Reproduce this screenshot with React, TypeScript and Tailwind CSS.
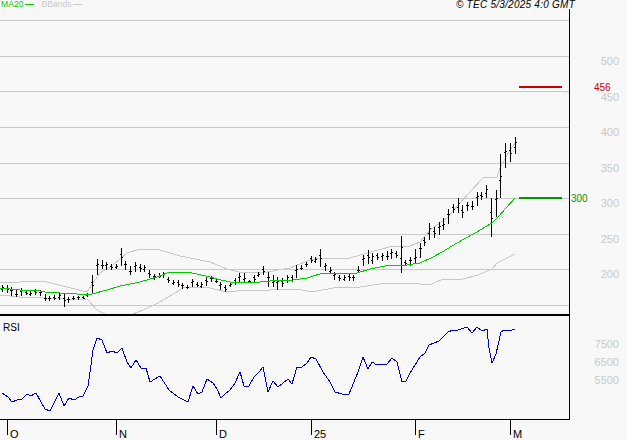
type Pt = [number, number];

// [high, low] per session, oldest first
const bars: Pt[] = [
  [285, 292], [285, 293], [287, 296], [290, 297], [288, 296], [290, 295], [291, 296], [289, 295], [290, 296], [294, 301], [296, 301],
  [295, 300], [293, 300], [293, 307], [297, 303], [296, 300], [296, 300], [296, 299], [293, 297], [275, 294], [259, 275], [260, 269],
  [262, 270], [264, 270], [264, 269], [248, 266], [261, 270], [266, 275], [262, 272], [264, 272], [265, 272], [270, 278], [274, 280],
  [273, 278], [272, 278], [277, 283], [280, 285], [280, 287], [283, 289], [285, 289], [279, 287], [282, 287], [282, 288], [276, 286],
  [276, 282], [278, 283], [282, 290], [285, 292], [282, 287], [278, 285], [273, 283], [273, 283], [280, 283], [275, 282], [272, 277],
  [266, 275], [272, 287], [275, 287], [277, 290], [278, 287], [275, 283], [275, 282], [265, 278], [265, 270], [262, 267], [256, 263],
  [257, 263], [249, 267], [263, 271], [267, 273], [272, 280], [275, 281], [275, 281], [273, 281], [275, 281], [266, 273], [255, 266],
  [250, 264], [253, 264], [253, 260], [253, 261], [251, 260], [249, 259], [251, 258], [236, 273], [260, 266], [257, 266], [249, 264],
  [243, 258], [237, 246], [223, 240], [227, 238], [222, 235], [218, 230], [209, 224], [204, 213], [198, 213], [205, 218], [202, 211],
  [201, 210], [192, 206], [192, 200], [185, 198], [198, 237], [190, 217], [154, 198], [143, 168], [143, 162], [137, 154],
];

const ma20: Pt[] = [
  [0, 288], [10, 289], [20, 290], [40, 291], [45, 292], [60, 293], [77, 294], [92, 294], [107, 290], [120, 286], [140, 282], [157, 277],
  [167, 273], [187, 272], [197, 274], [210, 277], [217, 279], [230, 282], [260, 282], [270, 281], [293, 280], [307, 278], [323, 273],
  [357, 273], [370, 269], [390, 265], [407, 265], [420, 263], [433, 257], [442, 252], [457, 243], [475, 233], [492, 223], [498, 217], [515, 198],
];

const bbUpper: Pt[] = [
  [0, 283], [20, 282], [43, 281], [67, 287], [87, 292], [93, 283], [100, 273], [113, 265], [127, 253], [140, 249], [160, 250], [180, 256],
  [210, 262], [227, 269], [243, 273], [267, 272], [290, 268], [310, 260], [323, 258], [350, 258], [367, 253], [393, 246], [410, 246],
  [420, 242], [430, 230], [447, 218], [458, 205], [483, 178], [497, 177], [500, 168], [510, 150], [515, 143],
];

const bbLower: Pt[] = [
  [0, 295], [20, 297], [43, 298], [88, 300], [97, 310], [105, 314], [133, 314], [143, 310], [160, 302], [183, 288], [197, 287], [210, 288],
  [227, 292], [247, 290], [270, 290], [297, 289], [312, 292], [333, 288], [360, 287], [387, 283], [420, 284], [432, 284], [443, 279],
  [463, 279], [478, 275], [492, 269], [497, 263], [515, 254],
];

const rsi: Pt[] = [
  [2, 393], [8, 397], [12, 402], [17, 400], [22, 399], [27, 394], [31, 396], [36, 393], [41, 402], [45, 409], [50, 411], [59, 393], [64, 406],
  [69, 398], [74, 400], [79, 397], [83, 396], [88, 386], [91, 365], [93, 350], [97, 338], [102, 340], [107, 353], [112, 351], [117, 353],
  [122, 348], [127, 362], [131, 368], [136, 360], [141, 368], [146, 368], [150, 382], [155, 379], [160, 376], [169, 390], [178, 397],
  [188, 402], [193, 386], [198, 394], [202, 392], [207, 379], [210, 381], [213, 383], [217, 389], [221, 398], [225, 394], [230, 390],
  [235, 383], [240, 372], [244, 386], [249, 386], [254, 377], [259, 372], [263, 367], [268, 392], [273, 381], [278, 387], [288, 379],
  [292, 384], [297, 367], [302, 367], [307, 363], [311, 357], [316, 359], [323, 372], [330, 382], [335, 392], [342, 394], [349, 394],
  [358, 372], [363, 357], [368, 369], [372, 362], [377, 365], [387, 364], [392, 358], [397, 362], [402, 382], [406, 381], [410, 373],
  [420, 357], [425, 353], [429, 345], [439, 341], [448, 332], [453, 330], [458, 330], [467, 327], [472, 333], [477, 327], [482, 331],
  [487, 329], [489, 348], [492, 363], [496, 354], [501, 332], [504, 330], [512, 330], [515, 329],
];

const gridY = [20, 56, 91, 127, 163, 198, 234, 269, 305];
const priceLabels = ['500', '450', '400', '350', '300', '250', '200'];
const rsiLabels = ['7500', '6500', '5500'];
const months = [
  { label: 'O', width: 'w-[109px]' },
  { label: 'N', width: 'w-[100px]' },
  { label: 'D', width: 'w-[95px]' },
  { label: '25', width: 'w-[104px]' },
  { label: 'F', width: 'w-[95px]' },
  { label: 'M', width: 'w-[60px]' },
];

const toPoints = (pts: Pt[]) => pts.map((p) => p.join(',')).join(' ');

function PriceChart() {
  return (
    <svg width={569} height={305} viewBox="0 9 569 305" className="block">
      {gridY.map((y) => (
        <rect key={y} x={0} y={y} width={569} height={1} fill="#c8c8c8" shapeRendering="crispEdges" />
      ))}
      <polyline points={toPoints(bbUpper)} fill="none" stroke="#c8c8c8" strokeWidth={1} shapeRendering="crispEdges" />
      <polyline points={toPoints(bbLower)} fill="none" stroke="#c8c8c8" strokeWidth={1} shapeRendering="crispEdges" />
      <g fill="#000" shapeRendering="crispEdges">
        {bars.map(([hi, lo], i) => {
          const x = Math.round(2 + i * 4.747);
          const range = lo - hi;
          const open = Math.round(hi + range * (i % 3 === 0 ? 0.6 : 0.35));
          const close = Math.round(hi + range * (i % 2 === 0 ? 0.3 : 0.5));
          return (
            <g key={i}>
              <rect x={x} y={hi} width={1} height={range} />
              <rect x={x - 1} y={open} width={1} height={1} />
              <rect x={x + 1} y={close} width={1} height={1} />
            </g>
          );
        })}
      </g>
      <polyline points={toPoints(ma20)} fill="none" stroke="#00cc00" strokeWidth={1} shapeRendering="crispEdges" />
      <rect x={519} y={86} width={43} height={2} fill="#cc0000" />
      <rect x={519} y={197} width={43} height={2} fill="#009900" />
    </svg>
  );
}

function RsiChart() {
  return (
    <svg width={569} height={103} viewBox="0 316 569 103" className="block">
      <polyline points={toPoints(rsi)} fill="none" stroke="#0000cc" strokeWidth={1} shapeRendering="crispEdges" />
    </svg>
  );
}

export default function App() {
  return (
    <div className="w-[627px] h-[440px] overflow-hidden bg-[#f8f8f8] font-['Liberation_Sans',sans-serif] text-[11px] leading-none text-black">
      {/* legend + copyright */}
      <div className="h-[9px] flex items-start justify-between pl-[1px] pr-[52px]">
        <div className="flex items-center h-[9px] text-[8.6px]">
          <span className="text-[#00cc00]">MA20</span>
          <span className="ml-[2px] w-[9px] h-px bg-[#00cc00]"></span>
          <span className="ml-[7px] text-[#c8c8c8]">BBands</span>
          <span className="ml-[1px] w-[9px] h-px bg-[#c8c8c8]"></span>
        </div>
        <span className="italic text-[10px] tracking-[0.25px]">© TEC 5/3/2025 4:0 GMT</span>
      </div>

      <div className="flex h-[411px]">
        <div className="w-[570px] border-r border-black">
          <div className="h-[305px]">
            <PriceChart />
          </div>
          <div className="h-[2px] bg-black"></div>
          <div className="relative h-[103px]">
            <RsiChart />
            <span className="absolute left-[3px] top-[7px] text-[10px]">RSI</span>
          </div>
          <div className="h-px bg-black"></div>
        </div>

        {/* value axis */}
        <div className="relative flex-1 text-[#c8c8c8]">
          <div className="pt-[47px] pr-[8px] flex flex-col items-end">
            {priceLabels.map((label) => (
              <div key={label} className="h-[35.5px]">
                {label}
              </div>
            ))}
          </div>
          <div className="mt-[34px] pr-[8px] flex flex-col items-end gap-[6px]">
            {rsiLabels.map((label) => (
              <div key={label} className="h-[12px]">
                {label}
              </div>
            ))}
          </div>
          <span className="absolute left-[24px] top-[74px] text-[10px] text-[#cc0000]">456</span>
          <span className="absolute left-[1px] top-[185px] text-[10px] text-[#009900]">300</span>
        </div>
      </div>

      {/* time axis */}
      <div className="flex pl-[7px] h-[20px]">
        {months.map((m) => (
          <div key={m.label} className={`${m.width} h-[15px] border-l border-black pl-[2px] pt-[9px]`}>
            {m.label}
          </div>
        ))}
      </div>
    </div>
  );
}
